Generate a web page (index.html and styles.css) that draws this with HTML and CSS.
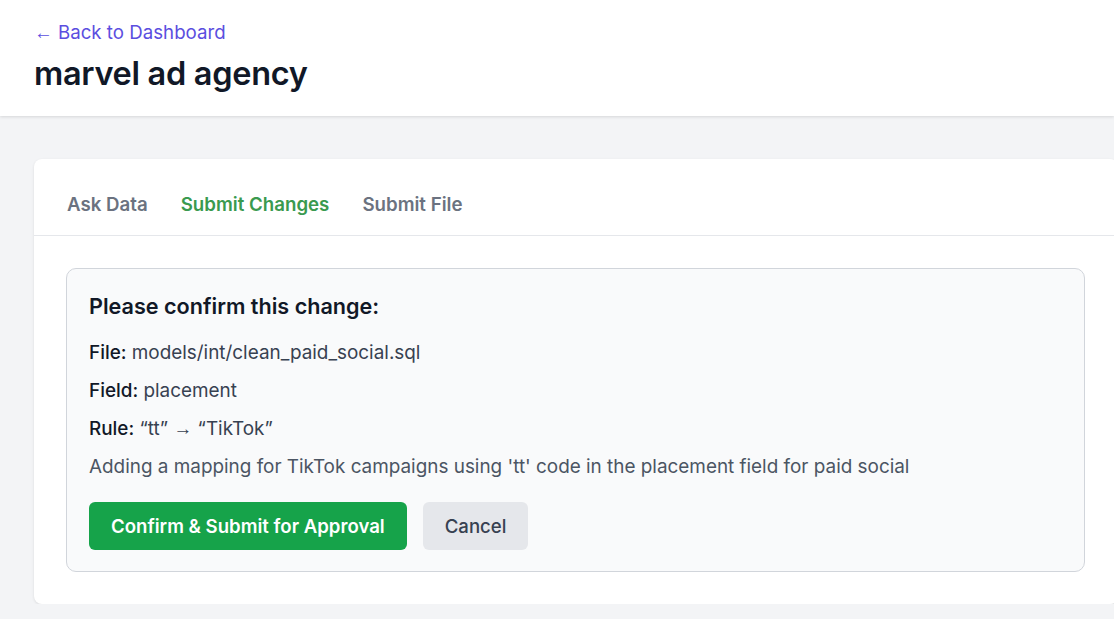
FILE: index.html
```html
<!DOCTYPE html>
<html lang="en">
<head>
<meta charset="utf-8">
<title>marvel ad agency</title>
<link rel="stylesheet" href="styles.css">
</head>
<body>
<header class="page-header">
  <a class="back-link" href="#"><span class="arrow">←</span> Back to Dashboard</a>
  <h1 class="page-title">marvel ad agency</h1>
</header>
<main class="page-main">
  <section class="card">
    <nav class="tabs">
      <span class="tab">Ask Data</span>
      <span class="tab tab-active">Submit Changes</span>
      <span class="tab">Submit File</span>
    </nav>
    <div class="card-body">
      <div class="confirm-box">
        <h2 class="confirm-title">Please confirm this change:</h2>
        <p class="detail"><strong>File:</strong> models/int/clean_paid_social.sql</p>
        <p class="detail"><strong>Field:</strong> placement</p>
        <p class="detail"><strong>Rule:</strong> “tt” <span class="arrow">→</span> “TikTok”</p>
        <p class="description">Adding a mapping for TikTok campaigns using 'tt' code in the placement field for paid social</p>
        <div class="actions">
          <button class="btn btn-primary">Confirm &amp; Submit for Approval</button>
          <button class="btn btn-secondary">Cancel</button>
        </div>
      </div>
    </div>
  </section>
</main>
</body>
</html>
```
FILE: styles.css
```css
* { box-sizing: border-box; }
html, body { margin: 0; padding: 0; }
body {
  font-family: Inter, "Noto Sans", sans-serif;
  background: #f3f4f6;
  color: #111827;
  overflow: hidden;
}
.arrow {
  font-family: "Liberation Sans", Arial, sans-serif;
}
.page-header {
  background: #ffffff;
  padding: 20px 34px 22px;
  box-shadow: 0 1px 3px rgba(0,0,0,0.12);
  height: 116px;
}
.back-link {
  display: block;
  color: #5b4ee0;
  text-decoration: none;
  font-size: 18.7px;
  line-height: 25px;
}
.page-title {
  margin: 9px 0 0;
  font-size: 32.5px;
  line-height: 40px;
  font-weight: 600;
  letter-spacing: -0.3px;
  color: #111827;
}
.page-main {
  padding: 43px 0 0 34px;
}
.card {
  width: 1084px;
  background: #ffffff;
  border-radius: 8px;
  box-shadow: 0 1px 3px rgba(0,0,0,0.10);
}
.tabs {
  display: flex;
  gap: 33px;
  padding: 0 33px;
  height: 77px;
  align-items: center;
  border-bottom: 1px solid #e5e7eb;
}
.tab {
  font-size: 18.7px;
  font-weight: 600;
  color: #6b7280;
  padding-top: 14px;
}
.tab-active { color: #3a9a4f; }
.card-body {
  padding: 32px 32px 32px;
}
.confirm-box {
  width: 1019px;
  border: 1px solid #d1d5db;
  border-radius: 10px;
  background: #f9fafb;
  padding: 22px 22px 21px;
}
.confirm-title {
  margin: 0 0 13px;
  font-size: 21.6px;
  line-height: 30px;
  font-weight: 600;
  color: #111827;
}
.detail, .description {
  margin: 0;
  font-size: 18.9px;
  line-height: 38px;
  color: #374151;
}
.detail strong {
  font-weight: 500;
  color: #111827;
}
.description { color: #4b5563; }
.actions {
  display: flex;
  gap: 16px;
  margin-top: 16px;
}
.btn {
  font-family: inherit;
  font-size: 18.6px;
  height: 48px;
  border: none;
  border-radius: 6px;
  padding: 0 22px;
  cursor: pointer;
}
.btn-primary {
  background: #16a34a;
  color: #ffffff;
  font-weight: 600;
}
.btn-secondary {
  background: #e5e7eb;
  color: #374151;
  font-weight: 500;
}
```
